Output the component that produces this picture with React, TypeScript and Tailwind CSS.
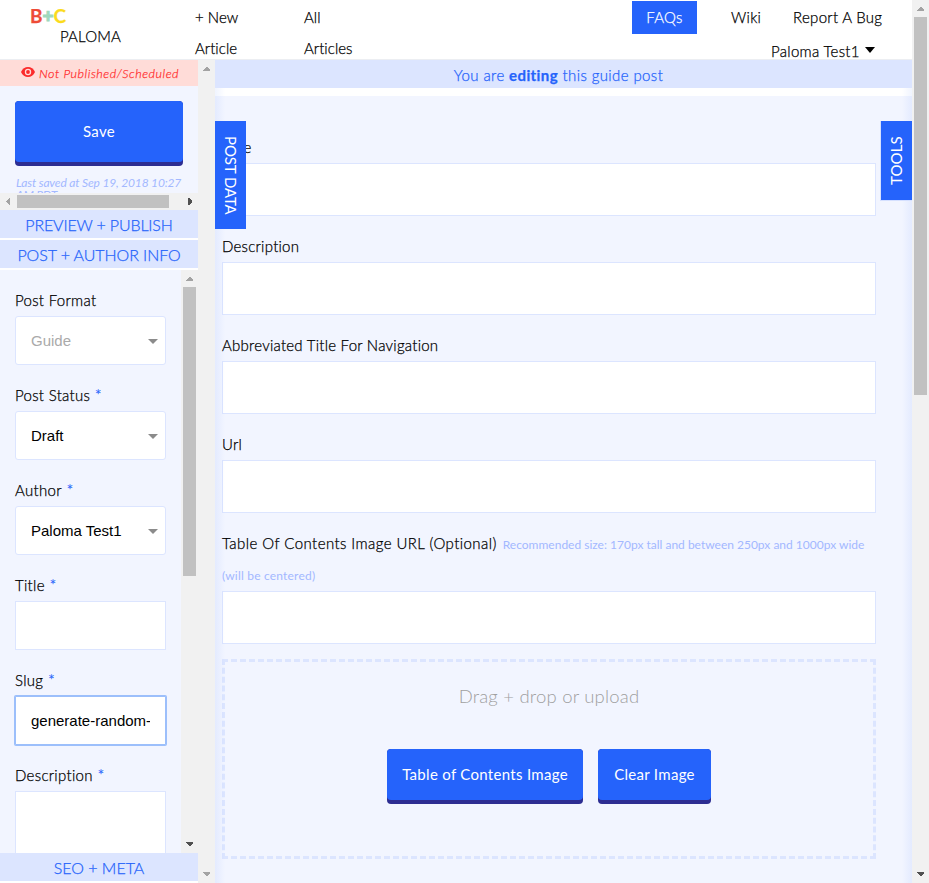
import type { ReactNode } from "react";

type ArrowDir = "up" | "down" | "left" | "right";

function Arrow({ dir, dark = false }: { dir: ArrowDir; dark?: boolean }) {
  const points = {
    up: "3,0 4,0 7,3 7,4 0,4 0,3",
    down: "0,0 7,0 7,1 4,4 3,4 0,1",
    left: "4,0 4,7 3,7 0,4 0,3 3,0",
    right: "0,0 1,0 4,3 4,4 1,7 0,7",
  }[dir];
  const flat = dir === "up" || dir === "down";
  return (
    <svg
      width={flat ? 7 : 4}
      height={flat ? 4 : 7}
      className={`shrink-0 ${dark ? "fill-[#505050]" : "fill-[#a3a3a3]"}`}
      shapeRendering="crispEdges"
    >
      <polygon points={points} />
    </svg>
  );
}

function VScroll({ thumb, downDark }: { thumb?: string; downDark?: boolean }) {
  return (
    <div className="flex w-[17px] shrink-0 flex-col items-center bg-[#f1f1f1]">
      <div className="flex h-[17px] shrink-0 items-center pt-px">
        <Arrow dir="up" />
      </div>
      <div className="flex-1">{thumb && <div className={`w-[13px] bg-[#c1c1c1] ${thumb}`} />}</div>
      <div className="flex h-[17px] shrink-0 items-center pb-px">
        <Arrow dir="down" dark={downDark} />
      </div>
    </div>
  );
}

function MainField({ label, tracking = "tracking-[0.25px]", hint }: { label: string; tracking?: string; hint?: ReactNode }) {
  return (
    <div className="mb-[15px]">
      <div className={`text-[15px] leading-[31px] font-light [-webkit-text-stroke:0.25px] ${tracking} ${hint ? "h-[63px]" : "h-[31px]"}`}>
        {label}
        {hint}
      </div>
      <div className="h-[53px] border border-[#dce5ff] bg-white" />
    </div>
  );
}

function Label({ text, required = true }: { text: string; required?: boolean }) {
  return (
    <div className="h-[31px] text-[15px] leading-[31px] font-light tracking-[0.3px] [-webkit-text-stroke:0.25px]">
      {text}
      {required && <span className="text-[16px] leading-none text-[#2563fb]"> *</span>}
    </div>
  );
}

function SelectField({ label, value, required, muted }: { label: string; value: string; required?: boolean; muted?: boolean }) {
  return (
    <div className="mb-[15px]">
      <Label text={label} required={required} />
      <div
        className={`flex h-[49px] items-center justify-between rounded-[3px] border border-[#dce5ff] bg-white pr-[7px] pl-[15px] font-['Liberation_Sans',sans-serif] text-[15px] ${muted ? "text-[#aaa]" : "text-black"}`}
      >
        <span className="pt-[2px]">{value}</span>
        <svg width="10" height="5" className="mt-[2px] fill-[#8b8b8b]">
          <polygon points="0,0 10,0 5,5" />
        </svg>
      </div>
    </div>
  );
}

function Bar({ children, tracking }: { children: string; tracking: string }) {
  return (
    <div className={`mb-[2px] flex h-[28px] shrink-0 items-center justify-center bg-[#dce5ff] pt-[2px] text-[16px] font-light whitespace-nowrap text-[#2563fb] [-webkit-text-stroke:0.25px] ${tracking}`}>
      {children}
    </div>
  );
}

function UploadButton({ children, width }: { children: string; width: string }) {
  return (
    <div className={`h-[55px] rounded-[4px] bg-[#2d2d92] pb-[4px] ${width}`}>
      <div className="flex h-[51px] items-center justify-center rounded-[4px] bg-[#2563fb] text-[15px] tracking-[0.3px] whitespace-nowrap text-white">
        {children}
      </div>
    </div>
  );
}

function Header() {
  return (
    <header className="flex h-[60px] shrink-0 border-b border-[#eceef2] bg-white text-[15px] font-light [-webkit-text-stroke:0.25px]">
      <div className="w-[195px] pt-[6px] pl-[30px]">
        <div className="text-[19px] leading-[20px] font-bold">
          <span className="text-[#ee4b37]">B</span>
          <span className="font-black text-[#a0d8bd] [-webkit-text-stroke:1px]">+</span>
          <span className="text-[#fbdb1d]">C</span>
        </div>
        <div className="pl-[30px] leading-[21px] tracking-[0.15px]">PALOMA</div>
      </div>
      <nav className="flex pt-[2px] leading-[31px]">
        <div className="w-[109px] tracking-[0.05px]">+ New<br />Article</div>
        <div className="tracking-[0.05px]">All<br />Articles</div>
      </nav>
      <div className="ml-auto w-[280px] pt-px tracking-[0.3px]">
        <div className="flex h-[33px] items-center whitespace-nowrap">
          <div className="mr-[34px] flex h-[33px] w-[65px] items-center justify-center bg-[#2563fb] text-white">FAQs</div>
          <div className="w-[62px]">Wiki</div>
          <div>Report A Bug</div>
        </div>
        <div className="flex h-[25px] items-center pt-[10px] pl-[139px] whitespace-nowrap">
          <div className="w-[94px]">Paloma Test1</div>
          <svg width="10" height="6" className="mb-[3px]">
            <polygon points="0,0 10,0 5,6" />
          </svg>
        </div>
      </div>
    </header>
  );
}

function Sidebar() {
  return (
    <aside className="flex w-[198px] shrink-0 flex-col overflow-hidden bg-white">
      <div className="flex h-[26px] shrink-0 items-center bg-[#ffdcd8] pl-[21px] text-[12.500px] tracking-[0.53px] whitespace-nowrap text-[#ff3030] italic">
        <svg width="14" height="10" viewBox="0 0 14 10" className="mr-[4px] mb-[2px]">
          <path d="M0 5C1.5 1.8 4 0 7 0s5.500 1.800 7 5c-1.500 3.200-4 5-7 5S1.500 8.200 0 5Z" fill="#fb2b2b" />
          <circle cx="7" cy="5" r="3.200" fill="#ffdcd8" />
          <circle cx="7" cy="5" r="1.900" fill="#fb2b2b" />
        </svg>
        <span className="pt-[2px] font-light [-webkit-text-stroke:0.25px]">Not Published/Scheduled</span>
      </div>
      <div className="h-[107px] shrink-0 overflow-hidden bg-[#f2f5ff] px-[15px] pt-[15px]">
        <div className="h-[65px] rounded-[4px] bg-[#2d2d92] pb-[4px]">
          <div className="flex h-[61px] items-center justify-center rounded-[4px] bg-[#2563fb] text-[15px] tracking-[0.35px] text-white">Save</div>
        </div>
        <div className="pt-[11px] pl-px text-[12px] leading-[12px] tracking-[-0.15px] text-[#a3b8ff] italic">
          <div className="whitespace-nowrap">Last saved at Sep 19, 2018 10:27</div>
          <div>AM PDT</div>
        </div>
      </div>
      <div className="flex h-[17px] shrink-0 items-center bg-[#f1f1f1] pl-[6px]">
        <Arrow dir="left" />
        <div className="mr-[19px] ml-[7px] h-[13px] w-[152px] bg-[#c1c1c1]" />
        <Arrow dir="right" dark />
      </div>
      <Bar tracking="tracking-[-0.15px]">PREVIEW + PUBLISH</Bar>
      <Bar tracking="tracking-[-0.07px]">POST + AUTHOR INFO</Bar>
      <div className="flex h-[583px] shrink-0 overflow-hidden bg-[#f2f5ff]">
        <div className="w-[181px] pt-[15px] pr-[15px] pl-[15px]">
          <SelectField label="Post Format" value="Guide" required={false} muted />
          <SelectField label="Post Status" value="Draft" />
          <SelectField label="Author" value="Paloma Test1" />
          <div className="mb-[15px]">
            <Label text="Title" />
            <div className="h-[49px] border border-[#dce5ff] bg-white" />
          </div>
          <div className="mb-[15px]">
            <Label text="Slug" />
            <div className="flex h-[49px] items-center rounded-[1px] border border-[#9cbffb] bg-white px-[15px] font-['Liberation_Sans',sans-serif] text-[15px] ring-1 ring-[#9cbffb]">
              <span className="overflow-hidden pt-[2px] whitespace-nowrap">generate-random-</span>
            </div>
          </div>
          <Label text="Description" />
          <div className="h-[100px] border border-[#dce5ff] bg-white" />
        </div>
        <VScroll thumb="h-[289px]" downDark />
      </div>
      <Bar tracking="tracking-normal">SEO + META</Bar>
    </aside>
  );
}

function Main() {
  return (
    <main className="relative flex flex-1 flex-col bg-white">
      <div className="mb-[8px] flex h-[28px] shrink-0 items-center justify-center bg-[#dce5ff] pt-[3px] pr-[10px] text-[15px] font-light tracking-[0.4px] text-[#2563fb] [-webkit-text-stroke:0.25px]">
        <div>You are <b className="font-bold">editing</b> this guide post</div>
      </div>
      <div className="flex-1 bg-[#f2f5ff] pt-[36px] pr-[36px] pl-[7px]">
        <MainField label="Title" />
        <MainField label="Description" />
        <MainField label="Abbreviated Title For Navigation" />
        <MainField label="Url" />
        <MainField
          label="Table Of Contents Image URL (Optional)"
          tracking="tracking-[0.43px]"
          hint={
            <span className="ml-[6px] text-[12px] leading-none font-normal tracking-normal text-[#a3b8ff] [-webkit-text-stroke:0]">
              Recommended size: 170px tall and between 250px and 1000px wide
              <br />
              <span className="tracking-[0.2px]">(will be centered)</span>
            </span>
          }
        />
        <div className="flex h-[200px] flex-col items-center border-[3px] border-dashed border-[#dce5ff] pt-[19px]">
          <div className="mb-[38px] h-[30px] text-[18.500px] leading-[30px] font-light tracking-[0.2px] text-[#a0a0a0]">Drag + drop or upload</div>
          <div className="flex gap-[15px]">
            <UploadButton width="w-[196px]">Table of Contents Image</UploadButton>
            <UploadButton width="w-[113px]">Clear Image</UploadButton>
          </div>
        </div>
      </div>
      <div className="absolute top-[28px] bottom-0 left-0 w-[10px] bg-linear-to-r from-[#2563fb]/7 to-transparent" />
      <div className="absolute top-[28px] right-0 bottom-0 w-[10px] bg-linear-to-l from-[#2563fb]/7 to-transparent" />
      <div className="absolute top-[61px] left-0 flex h-[108px] w-[31px] items-center justify-center bg-[#2563fb] text-[15px] tracking-[-0.1px] whitespace-nowrap text-white [writing-mode:vertical-rl]">
        POST DATA
      </div>
      <div className="absolute top-[61px] right-0 flex h-[79px] w-[31px] rotate-180 items-center justify-center bg-[#2563fb] text-[15px] tracking-[0.1px] text-white shadow-[0_0_0_1px_#d5e0ff] [clip-path:inset(-1px_-1px_0_0)] [writing-mode:vertical-rl]">
        TOOLS
      </div>
    </main>
  );
}

export default function App() {
  return (
    <div className="flex h-[883px] w-[929px] overflow-hidden bg-white font-['Lato',sans-serif] text-black">
      <div className="flex w-[912px] flex-col">
        <Header />
        <div className="flex min-h-0 flex-1">
          <Sidebar />
          <VScroll />
          <Main />
        </div>
      </div>
      <VScroll thumb="h-[378px]" downDark />
    </div>
  );
}
